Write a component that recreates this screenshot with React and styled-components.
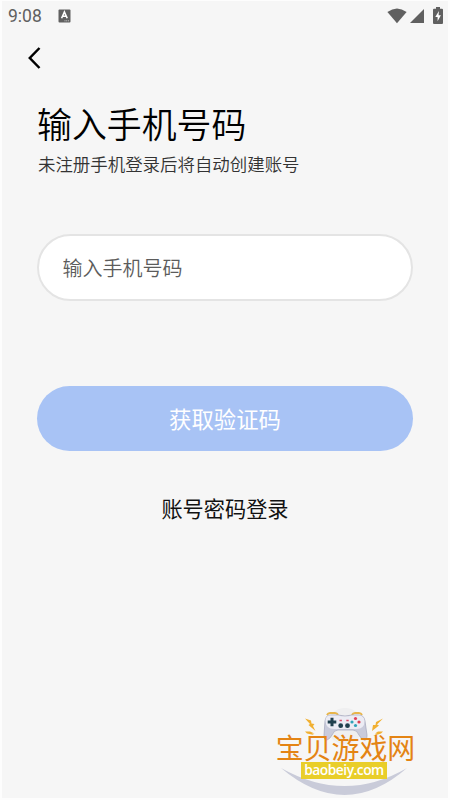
import styled, { createGlobalStyle } from 'styled-components';


const GlobalStyle = createGlobalStyle`
  * {
    box-sizing: border-box;
  }

  body {
    margin: 0;
    background-color: #f6f6f6;
    font-family: 'Noto Sans CJK SC', sans-serif;
  }
`;

const Screen = styled.div`
  position: relative;
  display: flex;
  flex-direction: column;
  width: 450px;
  height: 800px;
  overflow: hidden;
  background-color: #f6f6f6;
  border: 2px solid #fdfdfd;
  border-top-width: 1px;
`;

const StatusBar = styled.header`
  display: flex;
  align-items: center;
  height: 29px;
  padding: 0 5px 0 6px;
  color: #606060;
`;

const Clock = styled.span`
  width: 50px;
  padding-top: 2px;
  font-family: Roboto, sans-serif;
  font-size: 17.5px;
  line-height: 27px;
`;

const StatusIcons = styled.div`
  display: flex;
  align-items: center;
  margin-left: auto;

  svg {
    display: block;
  }
`;

const BackButton = styled.button`
  display: flex;
  width: 24px;
  height: 28px;
  margin: 14px 0 0 20px;
  padding: 0;
  border: 0;
  background: none;
`;

const Content = styled.main`
  display: flex;
  flex-direction: column;
  padding: 25px 35px 0;
`;

const Title = styled.h1`
  margin: 0;
  font-size: 34.9px;
  font-weight: 350;
  line-height: 52px;
  color: #000;
`;

const Subtitle = styled.p`
  margin: 0;
  padding-left: 1px;
  font-size: 17.45px;
  font-weight: 350;
  line-height: 30px;
  color: #333;
`;

const PhoneInput = styled.input`
  height: 67px;
  margin-top: 55px;
  padding: 0 23.5px;
  border: 2px solid #e4e4e4;
  border-radius: 34px;
  outline: none;
  background-color: #fff;
  font-family: inherit;
  font-size: 20px;
  font-weight: 350;

  &::placeholder {
    color: #5c5c5c;
    opacity: 1;
  }
`;

const SubmitButton = styled.button`
  height: 65px;
  margin-top: 85px;
  padding: 0 0 1px;
  border: 0;
  border-radius: 33px;
  background-color: #a8c3f5;
  color: #fff;
  font-family: inherit;
  font-size: 22.4px;
`;

const PasswordLink = styled.a`
  align-self: center;
  margin-top: 41px;
  font-size: 21.2px;
  line-height: 31px;
  color: #111;
`;

/* Site mark floating over the bottom right corner */
const Watermark = styled.div`
  position: absolute;
  right: 30px;
  bottom: 2px;
  width: 144px;
  height: 94px;
  display: flex;
  flex-direction: column;
  align-items: center;
  padding-top: 31px;
`;

const WatermarkArt = styled.svg`
  position: absolute;
  inset: 0;
`;

const WatermarkName = styled.span`
  position: relative;
  margin-right: 1px;
  font-size: 27.9px;
  line-height: 29px;
  white-space: nowrap;
  color: #e48414;
`;

const WatermarkDomain = styled.span`
  position: relative;
  width: 86px;
  height: 17px;
  margin-right: 4px;
  background-color: #e9ce29;
  color: #fff;
  font-family: 'Open Sans', sans-serif;
  font-size: 13.8px;
  font-weight: 600;
  letter-spacing: -0.5px;
  line-height: 15px;
  text-align: center;
`;

const KeyboardIcon = () => (
  <svg width="13" height="14" viewBox="0 0 13 14">
    <rect x="0.5" y="0.5" width="12" height="13" rx="1" fill="#606060" />
    <path d="M3.6 9.3 6.4 3 9.2 9.3M4.6 7.3h3.6" fill="none" stroke="#fff" strokeWidth="1.6" />
    <path d="M6.5 11.8h4.5" stroke="#ccc" strokeDasharray="1 0.7" />
  </svg>
);

const WifiIcon = () => (
  <svg width="20" height="16" viewBox="0 0 20 16">
    <path d="M0.4 4Q10-3.2 19.6 4L10 15.3Z" fill="#606060" />
  </svg>
);

const SignalIcon = () => (
  <svg width="17" height="14" viewBox="-3 0 17 14">
    <path d="M14 0v14H0Z" fill="#606060" />
  </svg>
);

const BatteryIcon = () => (
  <svg width="19" height="17" viewBox="-9 0 19 17">
    <path d="M3 0h4v1.7h2q1 0 1 1V16q0 1-1 1H1q-1 0-1-1V2.7q0-1 1-1h2Z" fill="#606060" />
    <path d="M5.9 4 2.3 10h2.3v4.2L7.9 8.2H5.6Z" fill="#fff" />
  </svg>
);

const GamepadArt = () => (
  <WatermarkArt width="144" height="94" viewBox="0 0 144 94">
    <circle cx="71" cy="24" r="18" fill="#efeff0" />
    <path d="M7 66Q71 102 133 66Q71 120 7 66Z" fill="#c9cbd9" />

    {/* Controller */}
    <path d="M53 13q1-2 3-2h5q2 0 3 2M78 13q1-2 3-2h4q2 0 3 2" fill="none" stroke="#e8b54a" strokeWidth="2" />
    <path
      d="M56 13h8q7 2 14 0h7q5 0 6 6l2 14q0 6-3 5-3-1-5-5-2-5-6-5H64q-4 0-6 5-2 4-5 5-3 1-3-5l1-14q1-6 5-6Z"
      fill="#c9cbdb"
      stroke="#a4a6bb"
      strokeWidth="0.7"
    />
    <path d="M56 13.5h8q7 2 14 0h7q5 0 5.5 5.5 0 8-8 8H60q-8 0-8.5-8 0-5.5 4.5-5.5Z" fill="#ececf4" />
    <path d="M58 15.7v8.6M53.7 20h8.6" stroke="#20404e" strokeWidth="3" />
    <circle cx="81.5" cy="16.5" r="1.6" fill="#e0405a" />
    <circle cx="78" cy="20" r="1.6" fill="#2fa3b8" />
    <circle cx="85" cy="20" r="1.6" fill="#dc3d50" />
    <circle cx="81.5" cy="23.5" r="1.6" fill="#2fa3b8" />
    <circle cx="66.7" cy="23.7" r="2.4" fill="#20404e" />
    <circle cx="73.5" cy="23.7" r="2.4" fill="#20404e" />
    <path d="M65.5 18.5h2.4M72.3 18.5h2.4" stroke="#dc4d68" strokeWidth="1.5" />

    {/* Sparks */}
    <path
      d="M31 16.5 37 18.5 37.5 21.5 40.5 22 39 24 41.5 29 34.5 23 36 22ZM31 29.5 36 29.5 40.5 31.5 38 31.5 40 33 33 31.5ZM109 16.5 102 20 101.5 23 99 23 98 29 105 23.5 103 22.5ZM109 29.5 104 29.5 101 31.5 103 31.5 99 34 107 31.5Z"
      fill="#f1b031"
    />
  </WatermarkArt>
);

const App = () => {
  return (
    <>
      <GlobalStyle />
      <Screen>
        <StatusBar>
          <Clock>9:08</Clock>
          <KeyboardIcon />
          <StatusIcons>
            <WifiIcon />
            <SignalIcon />
            <BatteryIcon />
          </StatusIcons>
        </StatusBar>

        <BackButton aria-label="返回">
          <svg width="24" height="28" viewBox="0 0 24 28">
            <path d="M17.5 4 7.8 14l9.7 10" fill="none" stroke="#000" strokeWidth="2.5" />
          </svg>
        </BackButton>

        <Content>
          <Title>输入手机号码</Title>
          <Subtitle>未注册手机登录后将自动创建账号</Subtitle>
          <PhoneInput type="tel" placeholder="输入手机号码" />
          <SubmitButton>获取验证码</SubmitButton>
          <PasswordLink>账号密码登录</PasswordLink>
        </Content>

        <Watermark>
          <GamepadArt />
          <WatermarkName>宝贝游戏网</WatermarkName>
          <WatermarkDomain>baobeiy.com</WatermarkDomain>
        </Watermark>
      </Screen>
    </>
  );
};

export default App;
